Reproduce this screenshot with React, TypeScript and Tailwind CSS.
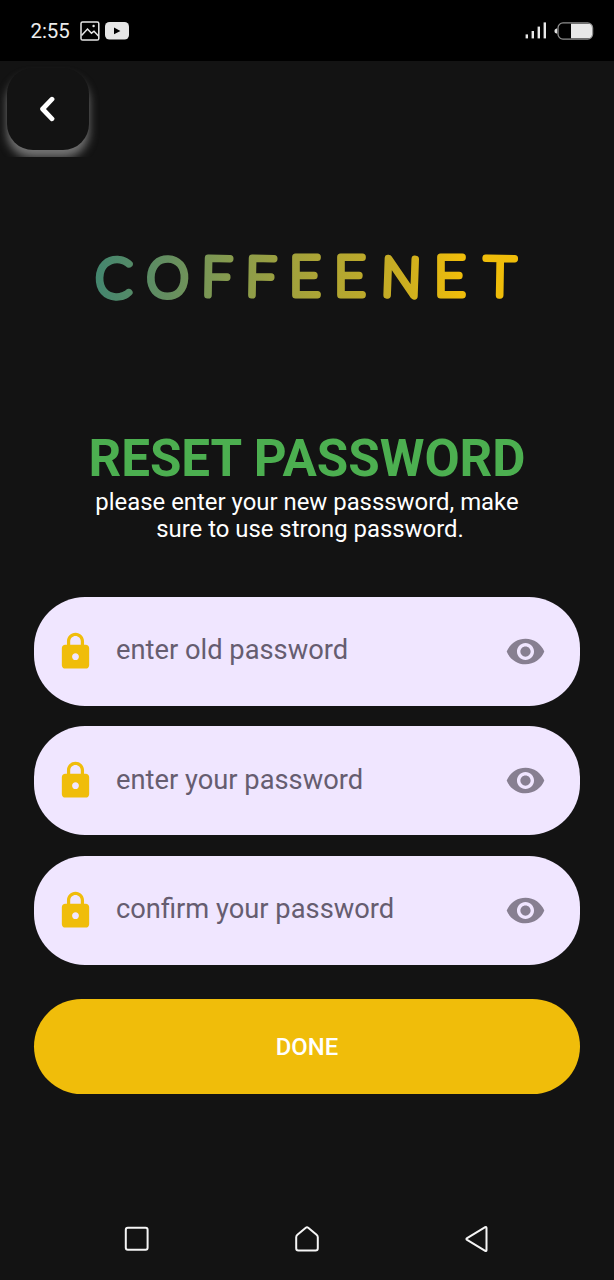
import { MdLock, MdVisibility } from "react-icons/md";

function StatusBar() {
  return (
    <header className="flex h-[61px] w-full shrink-0 items-center bg-black pl-[30.5px] pr-[20px] text-[#ececec]">
      <span className="w-[49.5px] pt-px text-[20.5px] leading-[24px] tracking-[-0.1px]">2:55</span>
      <svg className="h-5 w-5 shrink-0" viewBox="0 0 20 20" fill="none" stroke="#e6e6e6" strokeWidth="1.5">
        <rect x="1" y="1" width="17.8" height="18" rx="1.6" />
        <path d="M1.5 14.5 7.5 8l4 4.2 2.5-2 4.5 4.8" />
        <circle cx="13.6" cy="5" r="1.2" fill="#e6e6e6" stroke="none" />
      </svg>
      <svg className="ml-[5px] h-[18px] w-6 shrink-0" viewBox="0 0 24 18">
        <rect width="24" height="17.6" rx="4.5" fill="#e6e6e6" />
        <path d="M9 5.6v6.6l6.4-3.3z" fill="#000" />
      </svg>
      <svg className="ml-auto h-[17px] w-[22px]" viewBox="0 0 22 17" fill="#e8e8e8">
        <rect x="0.6" y="12.4" width="2.4" height="4" />
        <rect x="6.6" y="9" width="2.4" height="7.4" />
        <rect x="12.6" y="4.6" width="2.4" height="11.8" />
        <rect x="18.6" y="0.4" width="2.4" height="16" />
      </svg>
      <svg className="ml-[7px] h-[18px] w-10" viewBox="0 0 40 18">
        <path d="M3.2 6.4H2.4Q.4 7 .4 9t2 2.6h.8z" fill="#e0e0e0" />
        <rect x="4" y="0.9" width="34.6" height="16.2" rx="5" fill="none" stroke="#8f8f8f" strokeWidth="1.3" />
        <path d="M17 1.8h17a4 4 0 0 1 4 4v6.4a4 4 0 0 1-4 4H17z" fill="#e8e8e8" />
      </svg>
    </header>
  );
}

function BackButton() {
  return (
    <div className="h-24 w-[110px] shrink-0 overflow-hidden pl-[7px] pt-[7px]">
      <button
        aria-label="Back"
        className="flex h-[82px] w-[82px] items-center justify-center rounded-[26px] bg-[#131313] shadow-[0_8px_10px_0_#747474]"
      >
        <svg className="h-[26px] w-4" viewBox="0 0 16 26" fill="none" stroke="#fff" strokeWidth="4.8" strokeLinecap="round" strokeLinejoin="round">
          <path d="M12 3.2 2.6 13 12 22.8" />
        </svg>
      </button>
    </div>
  );
}

function Logo() {
  return (
    <svg className="h-[100px] w-[480px] overflow-visible" viewBox="67 226 480 100">
      <defs>
        <linearGradient id="brand" gradientUnits="userSpaceOnUse" x1="95" y1="0" x2="519" y2="0">
          <stop offset="0" stopColor="#43866f" />
          <stop offset="0.17" stopColor="#648e60" />
          <stop offset="0.3" stopColor="#839a50" />
          <stop offset="0.5" stopColor="#a8a338" />
          <stop offset="0.72" stopColor="#c9ad22" />
          <stop offset="0.86" stopColor="#efbd0b" />
          <stop offset="1" stopColor="#f0bd09" />
        </linearGradient>
      </defs>
      <text
        x="113 167 216.5 260.5 305 350 400.5 450 499.5"
        y="296 295.5 295 295 295 295 295 294.5 295"
        rotate="2 2 1 1 0 0 2 0 1"
        textAnchor="middle"
        className="font-['Lato'] text-[53px] font-thin"
        fill="url(#brand)"
        stroke="url(#brand)"
        strokeWidth="7"
        strokeLinejoin="round"
      >
        COFFEENET
      </text>
    </svg>
  );
}

function PasswordField({ placeholder }: { placeholder: string }) {
  return (
    <label className="flex h-[109px] w-full items-center rounded-[51px] bg-[#f0e6ff] pl-[20.5px] pr-[34px]">
      <MdLock className="h-[41px] w-[41px] shrink-0 text-[#f0bd0a]" />
      <input
        type="text"
        placeholder={placeholder}
        className="ml-[20.5px] mr-4 h-12 min-w-0 flex-1 bg-transparent pb-[2px] text-[27.3px] text-[#665d70] outline-none placeholder:text-[#665d70]"
      />
      <MdVisibility className="h-[41px] w-[41px] shrink-0 text-[#877f91]" />
    </label>
  );
}

function NavBar() {
  return (
    <nav className="mt-auto flex h-[82px] w-full items-center justify-between pl-[123px] pr-[124px]">
      <svg className="h-7 w-7" viewBox="0 0 28 28" fill="none" stroke="#f5f5f5" strokeWidth="2">
        <rect x="2.8" y="2.8" width="21.8" height="22" rx="2" />
      </svg>
      <svg className="h-7 w-7" viewBox="0 0 28 28" fill="none" stroke="#f5f5f5" strokeWidth="2" strokeLinejoin="round">
        <path d="M12.8 2.7q1.2-1 2.4 0l8.4 7q1.2 1 1.2 2.5v11q0 2.2-2.2 2.2H5.4q-2.2 0-2.2-2.2V12.2q0-1.5 1.2-2.5z" />
      </svg>
      <svg className="h-7 w-7" viewBox="0 0 28 28" fill="none" stroke="#f5f5f5" strokeWidth="2" strokeLinejoin="round">
        <path d="M24.5 3v22q0 1.6-1.3.8L5.1 14.9q-1.4-.9 0-1.8L23.2 2.2q1.3-.8 1.3.8z" />
      </svg>
    </nav>
  );
}

export default function App() {
  return (
    <div className="flex h-[1280px] w-[614px] flex-col overflow-hidden bg-[#131313] font-['Roboto',sans-serif]">
      <StatusBar />
      <BackButton />
      <div className="mt-[69px] flex justify-center">
        <Logo />
      </div>
      <div className="mt-[103px] flex flex-col items-center">
        <h1 className="whitespace-nowrap text-[51.1px] font-bold leading-[60px] text-[#4caf50]">RESET PASSWORD</h1>
        <p className="flex flex-col items-center text-[23.9px] leading-[27px] text-white">
          <span>please enter your new passsword, make</span>
          <span className="pl-1.5">sure to use strong password.</span>
        </p>
      </div>
      <form className="mt-[53.5px] flex flex-col gap-[20.5px] px-[34px]">
        <PasswordField placeholder="enter old password" />
        <PasswordField placeholder="enter your password" />
        <PasswordField placeholder="confirm your password" />
        <button
          type="button"
          className="mt-[13.5px] h-[95.5px] w-full rounded-full bg-[#f0bd0a] pt-[3px] text-[23.9px] font-medium text-white"
        >
          DONE
        </button>
      </form>
      <NavBar />
    </div>
  );
}
